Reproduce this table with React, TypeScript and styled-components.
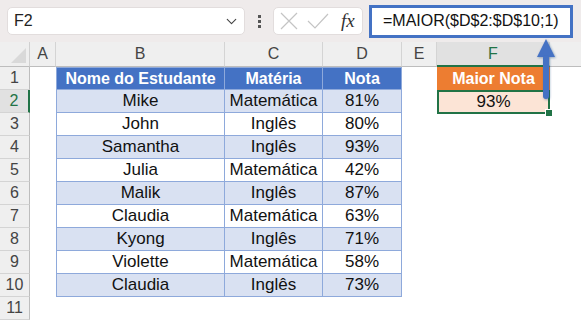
import React from "react";
import styled, { createGlobalStyle } from "styled-components";
import { ChevronDown } from "lucide-react";

const GlobalStyle = createGlobalStyle`
  html, body {
    margin: 0;
    padding: 0;
    background: #ffffff;
  }
  body {
    width: 581px;
    height: 322px;
    overflow: hidden;
    font-family: "Liberation Sans", Arial, sans-serif;
  }
`;

type Row = { name: string; subject: string; grade: string };

const rows: Row[] = [
  { name: "Mike", subject: "Matemática", grade: "81%" },
  { name: "John", subject: "Inglês", grade: "80%" },
  { name: "Samantha", subject: "Inglês", grade: "93%" },
  { name: "Julia", subject: "Matemática", grade: "42%" },
  { name: "Malik", subject: "Inglês", grade: "87%" },
  { name: "Claudia", subject: "Matemática", grade: "63%" },
  { name: "Kyong", subject: "Inglês", grade: "71%" },
  { name: "Violette", subject: "Matemática", grade: "58%" },
  { name: "Claudia", subject: "Inglês", grade: "73%" },
];

const columns = ["A", "B", "C", "D", "E", "F"];
const GREEN = "#217346";
const BLUE = "#4472c4";

export default function App() {
  return (
    <>
      <GlobalStyle />
      <Page>
        <Toolbar>
          <NameBox>
            <span>F2</span>
            <ChevronDown size={17} strokeWidth={1.6} color="#444" />
          </NameBox>
          <Dots>
            <i />
            <i />
            <i />
          </Dots>
          <FnBox>
            {/* cancel */}
            <svg width="18" height="18" viewBox="0 0 18 18">
              <path d="M1 1 L17 17 M17 1 L1 17" stroke="#c4c4c4" strokeWidth="1.2" fill="none" />
            </svg>
            {/* enter */}
            <svg width="22" height="16" viewBox="0 0 22 16">
              <path d="M1 8 L8 15 L21 1" stroke="#c4c4c4" strokeWidth="1.2" fill="none" />
            </svg>
            <Fx>fx</Fx>
          </FnBox>
          <FormulaBox>=MAIOR($D$2:$D$10;1)</FormulaBox>
        </Toolbar>

        <Sheet>
          <Corner />
          {columns.map((c) => (
            <ColHeader key={c} $active={c === "F"}>
              {c}
            </ColHeader>
          ))}
          <ColHeader $active={false} $last />

          {Array.from({ length: 11 }, (_, i) => {
            const r = i + 1;
            const data = r >= 2 && r <= 10 ? rows[r - 2] : null;
            const band = r % 2 === 0;
            return (
              <React.Fragment key={r}>
                <RowHeader $active={r === 2}>{r}</RowHeader>
                <Blank />
                {r === 1 && (
                  <>
                    <TableHead $first>Nome do Estudante</TableHead>
                    <TableHead>Matéria</TableHead>
                    <TableHead>Nota</TableHead>
                  </>
                )}
                {data && (
                  <>
                    <TableCell $band={band} $first>
                      {data.name}
                    </TableCell>
                    <TableCell $band={band}>{data.subject}</TableCell>
                    <TableCell $band={band}>{data.grade}</TableCell>
                  </>
                )}
                {r > 10 && (
                  <>
                    <Blank />
                    <Blank />
                    <Blank />
                  </>
                )}
                <Blank />
                {r === 1 ? (
                  <ResultHead>Maior Nota</ResultHead>
                ) : r === 2 ? (
                  <ResultCell>
                    93%
                    <Selection>
                      <FillHandle />
                    </Selection>
                  </ResultCell>
                ) : (
                  <Blank />
                )}
                <Blank />
              </React.Fragment>
            );
          })}
        </Sheet>

        <Arrow width="24" height="66" viewBox="0 0 24 66">
          <defs>
            <filter id="sh" x="-50%" y="-20%" width="200%" height="140%">
              <feDropShadow dx="0.8" dy="0.8" stdDeviation="0.8" floodColor="#1f3f7a" floodOpacity="0.45" />
            </filter>
          </defs>
          <g filter="url(#sh)">
            <polygon points="11,1 2,19 20,19" fill={BLUE} />
            <rect x="8" y="17" width="6" height="44" rx="3" fill={BLUE} />
          </g>
        </Arrow>
      </Page>
    </>
  );
}

const Page = styled.div`
  position: relative;
  width: 581px;
  height: 322px;
  overflow: hidden;
  background: #ffffff;
`;

const Toolbar = styled.div`
  height: 42px;
  display: flex;
  align-items: center;
  padding: 0 8px 0 7px;
  background: #efebeb;
  box-sizing: border-box;
`;

const NameBox = styled.div`
  width: 238px;
  height: 28px;
  box-sizing: border-box;
  background: #ffffff;
  border: 1px solid #e2dddd;
  border-radius: 5px;
  display: flex;
  align-items: center;
  justify-content: space-between;
  padding: 0 4px 0 6px;
  font-size: 16px;
  color: #222;
`;

const Dots = styled.div`
  width: 28px;
  display: flex;
  flex-direction: column;
  align-items: center;
  gap: 2px;

  & i {
    width: 3px;
    height: 3px;
    background: #555;
  }
`;

const FnBox = styled.div`
  width: 90px;
  height: 28px;
  box-sizing: border-box;
  background: #ffffff;
  border: 1px solid #e2dddd;
  border-radius: 5px;
  display: flex;
  align-items: center;
  gap: 9px;
  padding: 0 4px 0 6px;
`;

const Fx = styled.span`
  font-family: "Liberation Serif", "Times New Roman", serif;
  font-style: italic;
  font-size: 19px;
  color: #333;
  margin-left: 3px;
`;

const FormulaBox = styled.div`
  margin-left: 6px;
  width: 204px;
  height: 33px;
  box-sizing: border-box;
  border: 3px solid ${BLUE};
  background: #ffffff;
  display: flex;
  align-items: center;
  padding-left: 11px;
  font-size: 16px;
  color: #111;
  white-space: nowrap;
`;

const Sheet = styled.div`
  display: grid;
  grid-template-columns: 30px 26px 169px 98px 79px 35px 113px 1fr;
  grid-template-rows: 25px repeat(11, 23px);
`;

const Corner = styled.div`
  position: relative;
  background: #efefef;
  border-right: 1px solid #d0d0d0;
  border-bottom: 1px solid #bdbdbd;
  box-sizing: border-box;

  &::after {
    content: "";
    position: absolute;
    right: 3px;
    bottom: 3px;
    border-style: solid;
    border-width: 0 0 15px 15px;
    border-color: transparent transparent #d9d9d9 transparent;
  }
`;

const ColHeader = styled.div<{ $active: boolean; $last?: boolean }>`
  display: flex;
  align-items: center;
  justify-content: center;
  box-sizing: border-box;
  background: ${({ $active }) => ($active ? "#e1e1e1" : "#efefef")};
  color: ${({ $active }) => ($active ? GREEN : "#444")};
  border-right: ${({ $last }) => ($last ? "none" : "1px solid #d4d4d4")};
  border-bottom: ${({ $active }) =>
    $active ? `2px solid ${GREEN}` : "1px solid #bdbdbd"};
  font-size: 16px;
`;

const RowHeader = styled.div<{ $active: boolean }>`
  display: flex;
  align-items: center;
  justify-content: center;
  box-sizing: border-box;
  background: ${({ $active }) => ($active ? "#e1e1e1" : "#efefef")};
  color: ${({ $active }) => ($active ? GREEN : "#444")};
  border-bottom: 1px solid #d4d4d4;
  border-right: ${({ $active }) =>
    $active ? `2px solid ${GREEN}` : "1px solid #bdbdbd"};
  font-size: 16px;
`;

const Blank = styled.div`
  background: #ffffff;
`;

const baseCell = `
  display: flex;
  align-items: center;
  justify-content: center;
  box-sizing: border-box;
  white-space: nowrap;
  overflow: hidden;
`;

const TableHead = styled.div<{ $first?: boolean }>`
  ${baseCell}
  background: ${BLUE};
  color: #ffffff;
  font-weight: bold;
  font-size: 16px;
  border-top: 1px solid #8ea9db;
  border-right: 1px solid #8ea9db;
  border-bottom: 1px solid #8ea9db;
  border-left: ${({ $first }) => ($first ? "1px solid #8ea9db" : "none")};
`;

const TableCell = styled.div<{ $band: boolean; $first?: boolean }>`
  ${baseCell}
  background: ${({ $band }) => ($band ? "#d9e1f2" : "#ffffff")};
  color: #111;
  font-size: 17px;
  border-right: 1px solid #8ea9db;
  border-bottom: 1px solid #8ea9db;
  border-left: ${({ $first }) => ($first ? "1px solid #8ea9db" : "none")};
`;

const ResultHead = styled.div`
  ${baseCell}
  background: #ed7d31;
  color: #ffffff;
  font-weight: bold;
  font-size: 16px;
`;

const ResultCell = styled.div`
  ${baseCell}
  position: relative;
  overflow: visible;
  background: #fce4d6;
  color: #111;
  font-size: 17px;
`;

const Selection = styled.div`
  position: absolute;
  inset: 0 0 -1px 0;
  border: 2px solid ${GREEN};
  pointer-events: none;
`;

const FillHandle = styled.div`
  position: absolute;
  right: -5px;
  bottom: -5px;
  width: 6px;
  height: 6px;
  background: ${GREEN};
  border: 1px solid #ffffff;
`;

const Arrow = styled.svg`
  position: absolute;
  left: 535px;
  top: 38px;
`;
